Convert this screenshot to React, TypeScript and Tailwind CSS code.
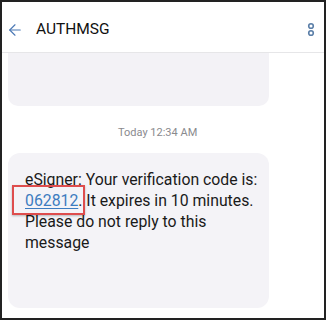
import { ArrowLeft } from "lucide-react";

function Kebab() {
  return (
    <svg width="8" height="16" viewBox="0 0 8 16" fill="none">
      <circle cx="4" cy="4" r="2.3" stroke="#5b7fa8" strokeWidth="1.6" />
      <circle cx="4" cy="11" r="2.3" stroke="#5b7fa8" strokeWidth="1.6" />
    </svg>
  );
}

export default function App() {
  return (
    <div
      className="w-[326px] h-[320px] overflow-hidden border-2 border-[#222] bg-white flex flex-col"
      style={{ fontFamily: "Roboto, 'Liberation Sans', sans-serif" }}
    >
      <header className="h-[51px] shrink-0 flex items-center border-b border-[#e6e6e8] pt-[6px] pl-[4px] pr-[9px]">
        <ArrowLeft size={18} strokeWidth={1.5} className="text-[#4a78b4]" />
        <h1 className="ml-[12px] text-[15.5px] text-[#111]">AUTHMSG</h1>
        <div className="ml-auto">
          <Kebab />
        </div>
      </header>

      <div className="flex-1 flex flex-col pl-[6px]">
        <div className="w-[261px] h-[53px] bg-[#f3f2f6] rounded-b-[10px]" />

        <p className="mt-[19px] ml-[110px] text-[11px] text-[#8a8a8e]">Today 12:34 AM</p>

        <div className="mt-[11px] w-[261px] h-[155px] bg-[#f4f3f7] rounded-[12px] pl-[17px] pt-[16px] text-[15.8px] leading-[21px] text-[#1a1a1a]">
          <p>eSigner: Your verification code is:</p>
          <p>
            <span className="relative text-[#3d7cc0] underline underline-offset-2">
              062812
              <span className="absolute -left-[13px] -top-[6px] w-[73px] h-[30px] border-2 border-[#de4d4d] shadow-[0_1px_2px_rgba(0,0,0,0.25)]" />
            </span>
            . It expires in 10 minutes.
          </p>
          <p>Please do not reply to this</p>
          <p>message</p>
        </div>
      </div>
    </div>
  );
}
